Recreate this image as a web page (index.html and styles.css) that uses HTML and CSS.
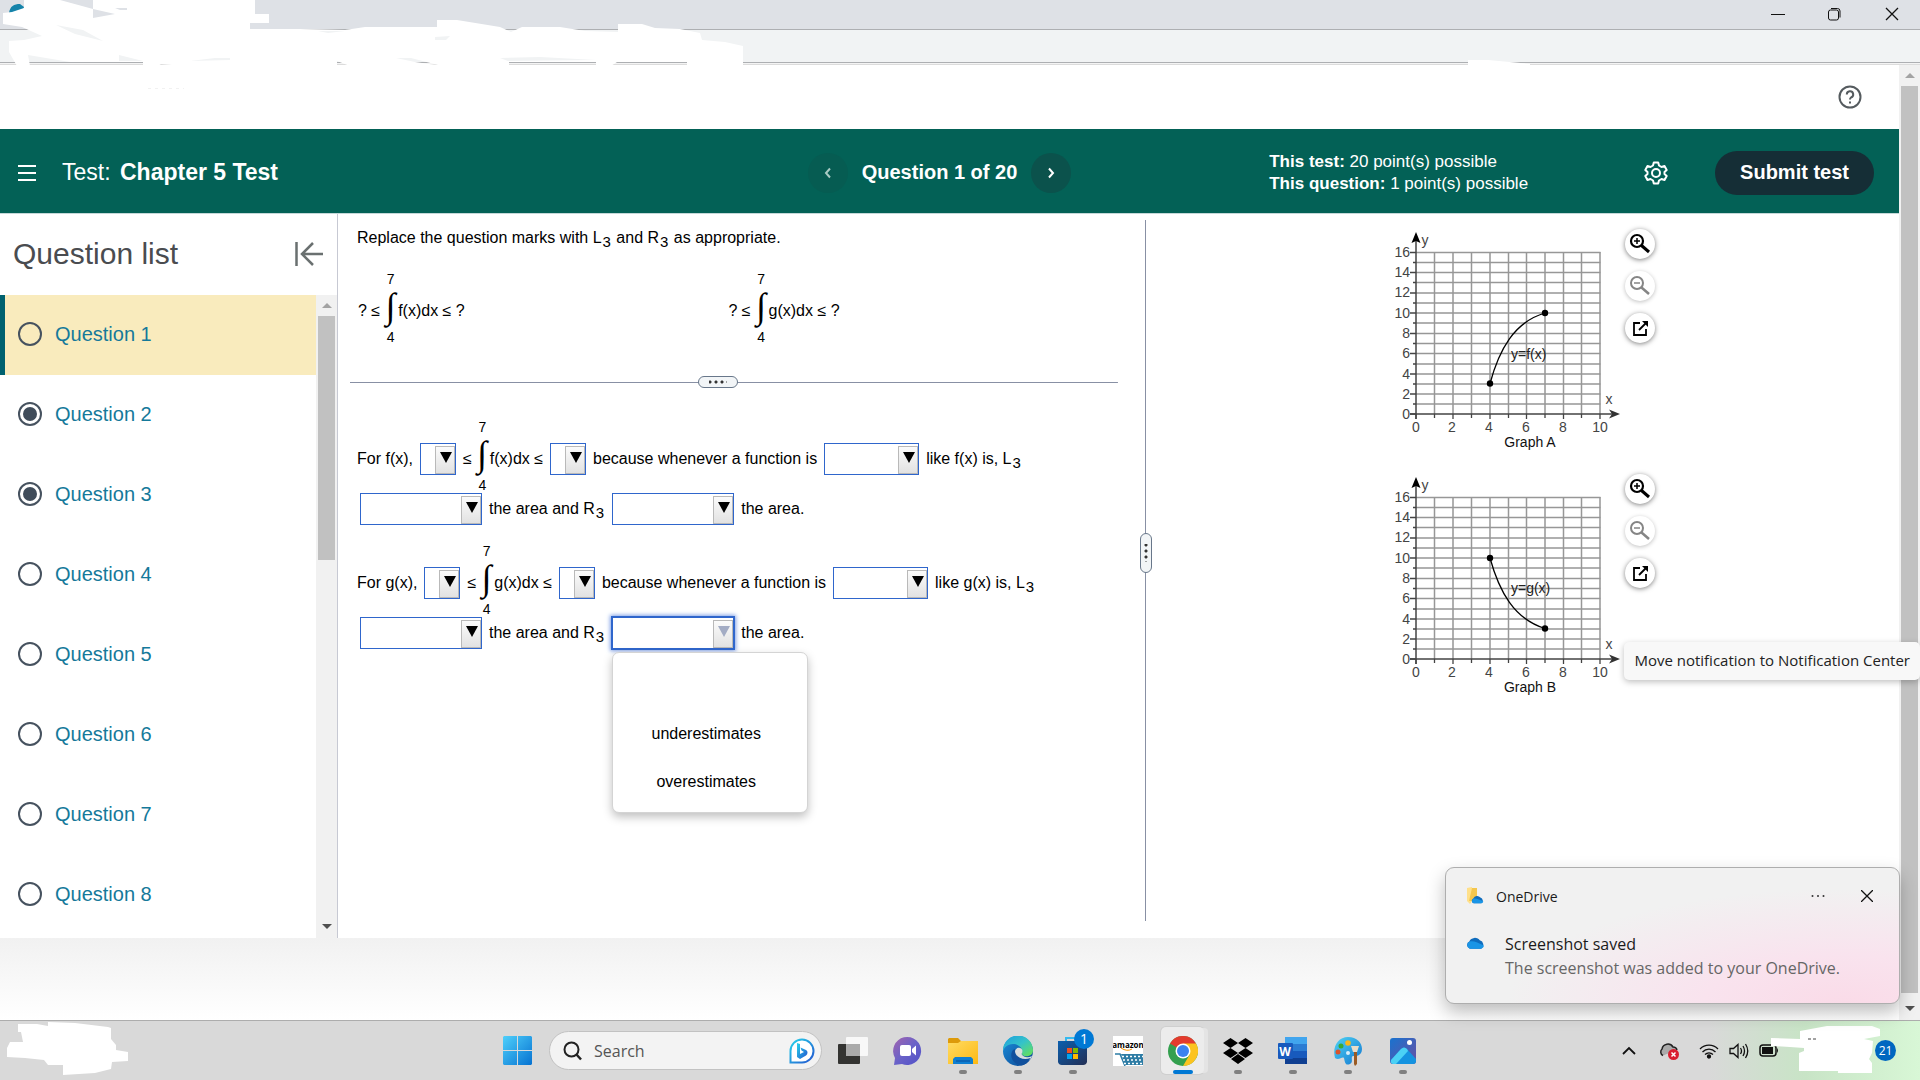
FILE: index.html
```html
<!DOCTYPE html>
<html lang="en">
<head>
    <meta charset="UTF-8">
    <meta name="viewport" content="width=device-width, initial-scale=1.0">
    <title>Chapter 5 Test</title>
    <link rel="stylesheet" href="styles.css">
</head>
<body>
    <!-- Shared drawings -->
    <svg class="defs" aria-hidden="true">
        <defs>
            <linearGradient id="winBlue" x1="0" y1="0" x2="1" y2="1"><stop offset="0" stop-color="#4fd0fb"/><stop offset="1" stop-color="#0672d1"/></linearGradient>
            <linearGradient id="bingBlue" x1="0" y1="0" x2="1" y2="1"><stop offset="0" stop-color="#27d4ea"/><stop offset="1" stop-color="#2355d0"/></linearGradient>
            <linearGradient id="chatPurple" x1="0" y1="0" x2="1" y2="1"><stop offset="0" stop-color="#a464ad"/><stop offset=".5" stop-color="#6a62c8"/><stop offset="1" stop-color="#5050c8"/></linearGradient>
            <linearGradient id="folderYellow" x1="0" y1="0" x2="1" y2="1"><stop offset="0" stop-color="#ffdb63"/><stop offset="1" stop-color="#fdb913"/></linearGradient>
            <linearGradient id="edgeTop" x1="0" y1="0" x2="1" y2="1"><stop offset="0" stop-color="#1c9ee0"/><stop offset=".5" stop-color="#35c3c9"/><stop offset="1" stop-color="#6be34c"/></linearGradient>
            <linearGradient id="edgeBody" x1="0" y1="0" x2="1" y2="1"><stop offset="0" stop-color="#1b8fdc"/><stop offset="1" stop-color="#0c4591"/></linearGradient>
            <linearGradient id="storeBlue" x1="0" y1="0" x2="1" y2="1"><stop offset="0" stop-color="#0b5fae"/><stop offset="1" stop-color="#232f55"/></linearGradient>
            <linearGradient id="photoBg" x1="0" y1="0" x2="1" y2="1"><stop offset="0" stop-color="#1873cf"/><stop offset="1" stop-color="#6a4fa3"/></linearGradient>
            <linearGradient id="paintBlue" x1="0" y1="0" x2="1" y2="1"><stop offset="0" stop-color="#4fd3f4"/><stop offset="1" stop-color="#1377d0"/></linearGradient>
        </defs>

        <symbol id="zoomIn" viewBox="0 0 22 22"><circle cx="8" cy="8" r="6" fill="none" stroke="currentColor" stroke-width="2.200"/><path d="M5 8H11M8 5V11" stroke="currentColor" stroke-width="1.500"/><path d="M12.500 12.500L20 19" stroke="currentColor" stroke-width="3"/></symbol>
        <symbol id="zoomOut" viewBox="0 0 22 22"><circle cx="8" cy="8" r="6" fill="none" stroke="currentColor" stroke-width="2"/><path d="M5 8H11" stroke="currentColor" stroke-width="1.500"/><path d="M12.500 12.500L20 19" stroke="currentColor" stroke-width="2.500"/></symbol>
        <symbol id="popOut" viewBox="0 0 22 22"><path d="M11 6H5V18H17V12" fill="none" stroke="currentColor" stroke-width="1.800"/><path d="M10 13L17 6" stroke="currentColor" stroke-width="1.800"/><path d="M13 4H19V10Z" fill="currentColor"/></symbol>
        <symbol id="cloud" viewBox="0 0 20 14"><path d="M4 13A4 4 0 0 1 3.500 5.500A6.500 6.500 0 0 1 14.500 4A5 5 0 0 1 16 13Z" fill="#0f6cbd"/><path d="M4 13A4 4 0 0 1 4 5.500C8 4.500 13 7 19 10A4 4 0 0 1 16 13Z" fill="#1a95e6"/></symbol>
    </svg>

    <!-- Browser window -->
    <header class="titlebar">
        <button class="win-btn" aria-label="Minimize"><svg width="14" height="14"><path d="M0 7.500H14" stroke="#111"/></svg></button>
        <button class="win-btn" aria-label="Restore"><svg width="14" height="14" fill="none" stroke="#111"><rect x="0.500" y="3" width="10" height="10" rx="2"/><path d="M3 1.500H9.500A2.500 2.500 0 0 1 12 4V10.500"/></svg></button>
        <button class="win-btn" aria-label="Close"><svg width="14" height="14"><path d="M1 1L13 13M13 1L1 13" stroke="#111" stroke-width="1.300"/></svg></button>
    </header>
    <div class="toolbar"></div>
    <svg class="cover-top" width="760" height="96" aria-hidden="true">
        <path d="M9 13C10 6 14 4 20 4L24 7L22 13Z" fill="#1583aa"/>
        <path fill="#fff" d="M3 13L12 12L24 8V0H60L93 9V0H255V14H269V23H250V29H300L345 30L365 27H437V20H457L500 27L511 32L522 27H560L585 31L618 32V24H642L655 28L680 29L700 33L702 40L725 42L743 46V66H687V62H617L611 66H596V62H509V66H442L411 58H396L415 62L443 66H350L337 61V66H183L161 64L158 66H143V62H91L70 62L28 55L30 66H17L9 52V41L24 40L42 36L22 27L3 24Z"/>
        <path fill="#dee1e6" d="M93 9L115 14L93 18ZM115 8H127V10H120Z"/>
        <path fill="#f1f3f4" d="M56 25L83 30L103 41L75 34ZM119 55L143 61H119ZM435 37L450 36L446 40L435 40ZM190 61L215 58H230V60ZM500 58L540 57L596 60L508 61ZM318 31L345 31L328 33Z"/>
        <path d="M148 88.500H184" stroke="#f1f1f1" stroke-dasharray="3 4"/>
    </svg>
    <svg class="cover-right" width="64" height="6" aria-hidden="true"><path d="M0 0H20L62 4V6H0Z" fill="#fff"/></svg>

    <div class="viewport">
        <div class="page">
            <div class="help-bar">
                <button class="icon-btn" aria-label="Help">
                    <svg width="24" height="24" fill="none" stroke="#555b5f" stroke-width="2"><circle cx="12" cy="12" r="10.500"/><path d="M8.800 9.500A3.200 3.200 0 1 1 13 12.500C12.200 13 12 13.500 12 14.500"/><path d="M12 16.500V18.500"/></svg>
                </button>
            </div>

            <div class="test-bar">
                <div class="test-name">
                    <button class="icon-btn" aria-label="Menu"><svg width="20" height="20"><path d="M1 3H19M1 10H19M1 17H19" stroke="#fff" stroke-width="2"/></svg></button>
                    <h1>Test: <strong>Chapter 5 Test</strong></h1>
                </div>
                <nav class="pager">
                    <button class="round dim" aria-label="Previous question"><svg width="8" height="12"><path d="M6 1.500L2 6L6 10.500" fill="none" stroke="#a9cbc4" stroke-width="2"/></svg></button>
                    <strong>Question 1 of 20</strong>
                    <button class="round" aria-label="Next question"><svg width="8" height="12"><path d="M2 1.500L6 6L2 10.500" fill="none" stroke="#fff" stroke-width="2"/></svg></button>
                </nav>
                <div class="test-tools">
                    <p class="points"><strong>This test:</strong> 20 point(s) possible<br><strong>This question:</strong> 1 point(s) possible</p>
                    <button class="icon-btn gear" aria-label="Settings">
                        <svg width="24" height="24" fill="none" stroke="#fff" stroke-width="2" stroke-linejoin="round"><path d="M9.800 1.500H14.200L15 4.500L17.500 6L20.500 5L22.700 9L20.500 11V13L22.700 15L20.500 19L17.500 18L15 19.500L14.200 22.500H9.800L9 19.500L6.500 18L3.500 19L1.300 15L3.500 13V11L1.300 9L3.500 5L6.500 6L9 4.500Z"/><circle cx="12" cy="12" r="4"/></svg>
                    </button>
                    <button class="submit">Submit test</button>
                </div>
            </div>

            <div class="workspace">
                <!-- Question list -->
                <aside class="sidebar">
                    <div class="sidebar-head">
                        <h2>Question list</h2>
                        <button class="icon-btn" aria-label="Collapse list"><svg width="30" height="26" fill="none" stroke="#6a7070" stroke-width="2.500"><path d="M2.500 1V25M29 13H8M19 2L8 13L19 24"/></svg></button>
                    </div>
                    <div class="sidebar-body">
                        <div class="questions">
                            <label class="question current"><input type="radio" name="q1">Question 1</label>
                            <label class="question"><input type="radio" name="q2" checked>Question 2</label>
                            <label class="question"><input type="radio" name="q3" checked>Question 3</label>
                            <label class="question"><input type="radio" name="q4">Question 4</label>
                            <label class="question"><input type="radio" name="q5">Question 5</label>
                            <label class="question"><input type="radio" name="q6">Question 6</label>
                            <label class="question"><input type="radio" name="q7">Question 7</label>
                            <label class="question"><input type="radio" name="q8">Question 8</label>
                        </div>
                        <div class="scrollbar list-scroll"><i class="up"></i><i class="thumb"></i><i class="down"></i></div>
                    </div>
                </aside>

                <!-- Exercise -->
                <main class="exercise">
                    <section class="problem">
                        <p class="prompt">Replace the question marks with L<sub>3</sub> and R<sub>3</sub> as appropriate.</p>
                        <div class="statements">
                            <div class="math-row">? ≤<span class="integral"><span>7</span><b>∫</b><span>4</span></span>f(x)dx ≤ ?</div>
                            <div class="math-row">? ≤<span class="integral"><span>7</span><b>∫</b><span>4</span></span>g(x)dx ≤ ?</div>
                        </div>
                        <div class="split-h"><button aria-label="Resize question"></button></div>

                        <div class="answer">
                            <div class="math-row">
                                <span>For f(x),</span>
                                <span class="drop small"><select aria-label="Lower sum of f"><option></option></select></span>
                                <span>≤</span><span class="integral"><span>7</span><b>∫</b><span>4</span></span><span>f(x)dx ≤</span>
                                <span class="drop small"><select aria-label="Upper sum of f"><option></option></select></span>
                                <span>because whenever a function is</span>
                                <span class="drop medium"><select aria-label="Behavior of f"><option></option></select></span>
                                <span>like f(x) is, L<sub>3</sub></span>
                            </div>
                            <div class="text-row">
                                <span class="drop large"><select aria-label="L3 for f"><option></option></select></span>
                                <span>the area and R<sub>3</sub></span>
                                <span class="drop large"><select aria-label="R3 for f"><option></option></select></span>
                                <span>the area.</span>
                            </div>
                        </div>

                        <div class="answer">
                            <div class="math-row">
                                <span>For g(x),</span>
                                <span class="drop small"><select aria-label="Lower sum of g"><option></option></select></span>
                                <span>≤</span><span class="integral"><span>7</span><b>∫</b><span>4</span></span><span>g(x)dx ≤</span>
                                <span class="drop small"><select aria-label="Upper sum of g"><option></option></select></span>
                                <span>because whenever a function is</span>
                                <span class="drop medium"><select aria-label="Behavior of g"><option></option></select></span>
                                <span>like g(x) is, L<sub>3</sub></span>
                            </div>
                            <div class="text-row">
                                <span class="drop large"><select aria-label="L3 for g"><option></option></select></span>
                                <span>the area and R<sub>3</sub></span>
                                <span class="drop large open">
                                    <select aria-label="R3 for g"><option></option></select>
                                    <ul class="menu" role="listbox">
                                        <li role="option"></li>
                                        <li role="option">underestimates</li>
                                        <li role="option">overestimates</li>
                                    </ul>
                                </span>
                                <span>the area.</span>
                            </div>
                        </div>
                    </section>

                    <div class="split-v"><button aria-label="Resize panels"></button></div>

                    <section class="graphs">
                        <figure class="graph">
                            <svg width="232" height="222" role="img" aria-label="Graph A">
                                <g id="axes">
                                    <g fill="none" stroke="#979797" stroke-width="1.5">
                                        <path d="M44.5 20V182M63 20V182M81.5 20V182M100 20V182M118.500 20V182M136.500 20V182M155 20V182M173.500 20V182M191.500 20V182M210 20V182"/>
                                        <path d="M26 20.500H210.500M26 30.500H210.500M26 40.500H210.500M26 50.500H210.500M26 61H210.500M26 71H210.500M26 81H210.500M26 91H210.500M26 101.500H210.500M26 111.500H210.500M26 121.500H210.500M26 132H210.500M26 142H210.500M26 152H210.500M26 162H210.500M26 172H210.500"/>
                                    </g>
                                    <path d="M20 20.500H26M23 30.500H26M20 40.500H26M23 50.500H26M20 61H26M23 71H26M20 81H26M23 91H26M20 101.500H26M23 111.500H26M20 121.500H26M23 132H26M20 142H26M23 152H26M20 162H26M23 172H26M20 182H26M26 182V187M44.500 182V186M63 182V187M81.500 182V186M100 182V187M118.500 182V186M136.500 182V187M155 182V186M173.500 182V187M191.500 182V186M210 182V187" fill="none" stroke="#444" stroke-width="1.300"/>
                                    <path d="M26 187V6M20 182H224" fill="none" stroke="#444" stroke-width="1.500"/>
                                    <path d="M26 0L30.500 11L26 9L21.500 11Z" fill="#000"/>
                                    <path d="M230 182L219 177.500L222 182L219 186.500Z" fill="#333"/>
                                    <g class="tick" text-anchor="end">
                                        <text x="20" y="25">16</text><text x="20" y="45">14</text><text x="20" y="65">12</text>
                                        <text x="20" y="86">10</text><text x="20" y="106">8</text><text x="20" y="126">6</text>
                                        <text x="20" y="147">4</text><text x="20" y="167">2</text><text x="20" y="187">0</text>
                                    </g>
                                    <g class="tick" text-anchor="middle">
                                        <text x="26" y="200">0</text><text x="62" y="200">2</text><text x="99" y="200">4</text>
                                        <text x="136" y="200">6</text><text x="173" y="200">8</text><text x="210" y="200">10</text>
                                        <text x="35" y="13">y</text><text x="219" y="172">x</text>
                                    </g>
                                </g>
                                <path d="M100 151.500C109 118 124 90 155 81" fill="none" stroke="#000" stroke-width="1.300"/>
                                <circle cx="100" cy="151.500" r="3.200"/><circle cx="155" cy="81" r="3.200"/>
                                <text class="curve" x="121" y="127">y=f(x)</text>
                                <text class="caption" x="140" y="215" text-anchor="middle">Graph A</text>
                            </svg>
                            <div class="graph-tools">
                                <button aria-label="Zoom in"><svg width="22" height="22"><use href="#zoomIn"/></svg></button>
                                <button aria-label="Zoom out" class="off"><svg width="22" height="22"><use href="#zoomOut"/></svg></button>
                                <button aria-label="Open in window"><svg width="22" height="22"><use href="#popOut"/></svg></button>
                            </div>
                        </figure>
                        <figure class="graph">
                            <svg width="232" height="222" role="img" aria-label="Graph B">
                                <use href="#axes"/>
                                <path d="M100 81C109 114 124 142 155 151.500" fill="none" stroke="#000" stroke-width="1.300"/>
                                <circle cx="100" cy="81" r="3.200"/><circle cx="155" cy="151.500" r="3.200"/>
                                <text class="curve" x="121" y="116">y=g(x)</text>
                                <text class="caption" x="140" y="215" text-anchor="middle">Graph B</text>
                            </svg>
                            <div class="graph-tools">
                                <button aria-label="Zoom in"><svg width="22" height="22"><use href="#zoomIn"/></svg></button>
                                <button aria-label="Zoom out" class="off"><svg width="22" height="22"><use href="#zoomOut"/></svg></button>
                                <button aria-label="Open in window"><svg width="22" height="22"><use href="#popOut"/></svg></button>
                            </div>
                        </figure>
                    </section>
                </main>
            </div>
            <footer class="page-foot"></footer>
        </div>
        <div class="scrollbar page-scroll"><i class="up"></i><i class="thumb"></i><i class="down"></i></div>
    </div>

    <!-- Taskbar -->
    <footer class="taskbar">
        <div class="task-left">
            <svg class="cover-left" width="130" height="56" aria-hidden="true"><path fill="#fff" d="M18 3H37L48 5V1L75 2L108 6L111 7V18L116 24V29L128 31V40L112 41L111 48L95 52L63 54V44H48L44 39L25 37L7 36V27L10 21H23L21 11H18Z"/></svg>
        </div>
        <div class="task-icons">
            <button class="app" aria-label="Start"><svg width="29" height="29" fill="url(#winBlue)"><path d="M1 0H14V14H0V1ZM15 0H28L29 1V14H15ZM0 15H14V29H1L0 28ZM15 15H29V28L28 29H15Z"/></svg></button>
            <label class="search">
                <svg width="20" height="20" fill="none" stroke="#222" stroke-width="2"><circle cx="8.500" cy="8.500" r="7"/><path d="M13.500 13.500L18 18.500" stroke-width="2.500"/></svg>
                <input type="text" placeholder="Search" aria-label="Search">
                <svg width="26" height="26"><path d="M1.500 24.500V13A11.500 11.500 0 1 1 13 24.500Z" fill="#fff" stroke="url(#bingBlue)" stroke-width="2"/><path d="M8 5L11 6V16L15 14L12.500 12.500L11.500 9.500L17 12C19 13 19 16 17 17.500L11 21L8 19Z" fill="url(#bingBlue)"/></svg>
            </label>
            <button class="app" aria-label="Task view"><svg width="30" height="30"><rect x="0" y="8" width="22" height="20" rx="1" fill="#333331"/><rect x="8" y="1" width="22" height="19" rx="1" fill="#fff" fill-opacity=".8"/><rect x="8" y="8" width="14" height="12" fill="#aaa"/></svg></button>
            <button class="app" aria-label="Chat"><svg width="30" height="30"><path d="M1 29L2 22A14 14 0 1 1 9 28Z" fill="url(#chatPurple)"/><rect x="7" y="9" width="11" height="11" rx="2" fill="#fff"/><path d="M19 13L23 9.500V19.500L19 16Z" fill="#fff"/></svg></button>
            <button class="app running" aria-label="File Explorer"><svg width="30" height="30"><path d="M0 3L1 2H10L13 5H29L30 6V12H0Z" fill="#dd9a0a"/><path d="M0 7H10L13 5H30V28H0Z" fill="url(#folderYellow)"/><path d="M5 28V23L7 21H23L25 23V28Z" fill="#0f7fd2"/><path d="M8 25H22" stroke="#084f9c"/></svg></button>
            <button class="app running" aria-label="Edge"><svg width="30" height="30"><circle cx="15" cy="15" r="15" fill="url(#edgeBody)"/><path d="M0 15A15 15 0 0 1 30 14C30 19 26 21 21 20L18.500 18C21 14 17 8 10 8C4 8 1 12 0 15Z" fill="url(#edgeTop)"/><path d="M12 18C11 14 14 11 17 12C20 13 20 16 18.500 18C21 22 25 22 29 20L27 24C20 26 13 24 12 18Z" fill="#d9dddd"/><path d="M10 14C6 19 9 28 18 29.500C23 29 26 25 27.500 22C20 25 11 21 12 13Z" fill="#10509d"/></svg></button>
            <button class="app running" aria-label="Store"><svg width="30" height="30"><path d="M8 7V2H20V7" fill="none" stroke="#35b9ef" stroke-width="2"/><path d="M0 5H29V26A4 4 0 0 1 25 29H4A4 4 0 0 1 0 26Z" fill="url(#storeBlue)"/><path d="M9 12H14V17H9Z" fill="#f25022"/><path d="M15 12H20V17H15Z" fill="#7fba00"/><path d="M9 18H14V23H9Z" fill="#00a4ef"/><path d="M15 18H20V23H15Z" fill="#ffb900"/></svg><span class="count">1</span></button>
            <button class="app" aria-label="Amazon"><svg width="30" height="30"><rect width="30" height="30" fill="#fff"/><text class="amazon" x="15" y="12" text-anchor="middle">amazon</text><path d="M8 12Q14 16 19 13" fill="none" stroke="#f79400"/><path d="M2 18H7L12 30" fill="none" stroke="#2d7ca5" stroke-width="1.500"/><path d="M8 18H30V29H12Z" fill="#2d7ca5"/><path d="M9 20.500H30M10 24H30M11 27.500H30" stroke="#fff" stroke-width="1.500" stroke-dasharray="2 2"/></svg></button>
            <button class="app running active" aria-label="Chrome"><svg width="30" height="30"><circle cx="15" cy="15" r="15" fill="#34a04f"/><path d="M15 15L2 7.500A15 15 0 0 1 28 7.500Z" fill="#e33b2e"/><path d="M15 7.500H28A15 15 0 0 1 15 30L22 18Z" fill="#fcc31f"/><circle cx="15" cy="15" r="7.500" fill="#fff"/><circle cx="15" cy="15" r="6" fill="#3b82f0"/></svg></button>
            <button class="app running" aria-label="Dropbox"><svg width="30" height="30"><path d="M7.500 2L15 7L7.500 12L0 7ZM22.500 2L30 7L22.500 12L15 7ZM7.500 12L15 17L7.500 22L0 17ZM22.500 12L30 17L22.500 22L15 17ZM15 18L22 23L15 28L8 23Z"/></svg></button>
            <button class="app running" aria-label="Word"><svg width="30" height="30"><path d="M7 1H29V8H7Z" fill="#41a5ee"/><path d="M7 8H29V15H7Z" fill="#2b7cd3"/><path d="M7 15H29V22H7Z" fill="#185abd"/><path d="M7 22H29V28H7Z" fill="#103f91"/><rect x="0" y="7" width="15" height="16" rx="1" fill="#185abd"/><text class="word" x="7" y="20" text-anchor="middle">W</text></svg></button>
            <button class="app running" aria-label="Paint"><svg width="30" height="30"><path d="M2 22C-1 11 5 1 15 1C24 1 29 7 29 13C29 20 23 20 20 20C17 21 21 26 17 28C12 30 12 26 11 22C9 20 6 25 2 22Z" fill="url(#paintBlue)"/><circle cx="15" cy="7" r="2.800" fill="#f9b71d"/><circle cx="8" cy="10" r="2.500" fill="#39a935"/><circle cx="5" cy="16" r="2.500" fill="#d9532c"/><circle cx="15" cy="17" r="2" fill="#d9eefa"/><path d="M21 16H24V28L22 30L21 28Z" fill="#9a5b24"/><path d="M18 10H26L24 16H20Z" fill="#e9dcc6"/></svg></button>
            <button class="app running" aria-label="Photos"><svg width="28" height="28"><rect x="1" y="1" width="26" height="26" rx="3" fill="url(#photoBg)"/><path d="M2 23L12 12C14 10 16 10 18 12L27 22V24A3 3 0 0 1 24 27H4A3 3 0 0 1 2 23Z" fill="#1593e0"/><path d="M2 23L12 12C14 10 16 10 18 12L19 14L7 27H4A3 3 0 0 1 2 23Z" fill="#4bd1f5"/><circle cx="20.500" cy="5.500" r="2.500" fill="#fff"/></svg></button>
        </div>
        <div class="tray">
            <svg width="20" height="20"><path d="M4 13L10 7L16 13" fill="none" stroke="#111" stroke-width="1.800"/></svg>
            <svg width="20" height="20"><path d="M4 14.500A4 4 0 0 1 3 8A6 6 0 0 1 14 6A4 4 0 0 1 18 9" fill="#aaa" stroke="#222" stroke-width="1.500"/><circle cx="14.500" cy="13.500" r="5.500" fill="#d91f30"/><path d="M12.500 11.500L16.500 15.500M16.500 11.500L12.500 15.500" stroke="#fff" stroke-width="1.500"/></svg>
            <svg width="20" height="20" fill="none" stroke="#111" stroke-width="1.300"><path d="M1 8A12.500 12.500 0 0 1 19 8M3.500 11A9 9 0 0 1 16.500 11M6 13.500A6 6 0 0 1 14 13.500"/><circle cx="10" cy="15.500" r="1.500" fill="#111"/></svg>
            <svg width="20" height="20" fill="none" stroke="#111" stroke-width="1.300"><path d="M1 7.500H4.500L9 3.500V16.500L4.500 12.500H1Z"/><path d="M11.500 7Q13.500 10 11.500 13M14 5Q17 10 14 15M16.500 3Q21 10 16.500 17"/></svg>
            <svg width="20" height="20"><rect x="1" y="4" width="16" height="11" rx="3" fill="none" stroke="#111" stroke-width="1.500"/><rect x="3" y="6" width="11" height="7" fill="#111"/><path d="M18 7Q20 9.500 18 12Z" fill="#111"/></svg>
            <span class="badge">21</span>
            <svg class="cover-clock" width="112" height="50" aria-hidden="true"><path fill="#fff" d="M0 13L29 14V6L56 1H101L109 4V11L93 14L102 16L101 28L98 34L101 38V48H67V46H28V28L33 26V23L19 22L0 21Z"/><path d="M37 14H46" stroke="#444" stroke-dasharray="3 2"/></svg>
        </div>
    </footer>

    <!-- Notification -->
    <div class="tooltip" role="tooltip">Move notification to Notification Center</div>
    <div class="toast" role="status">
        <div class="toast-head">
            <svg width="18" height="18"><path d="M1 1L6 0V14L4 17L1 14Z" fill="#ffe08a"/><path d="M6 1H11V14H3Z" fill="#f4c64e"/><svg x="5" y="8" width="13" height="9"><use href="#cloud"/></svg></svg>
            <span>OneDrive</span>
            <button aria-label="More"><svg width="14" height="4" fill="#333"><circle cx="1.500" cy="2" r="1"/><circle cx="7" cy="2" r="1"/><circle cx="12.500" cy="2" r="1"/></svg></button>
            <button aria-label="Dismiss"><svg width="12" height="12"><path d="M0 0L12 12M12 0L0 12" stroke="#111" stroke-width="1.300"/></svg></button>
        </div>
        <div class="toast-body">
            <svg width="19" height="14"><use href="#cloud"/></svg>
            <div>
                <p>Screenshot saved</p>
                <p class="muted">The screenshot was added to your OneDrive.</p>
            </div>
        </div>
    </div>
</body>
</html>
```
FILE: styles.css
```css
* {
    margin: 0;
    padding: 0;
    box-sizing: border-box;
}

body {
    height: 100vh;
    display: flex;
    flex-direction: column;
    position: relative;
    overflow: hidden;
    font-family: "Liberation Sans", Arial, sans-serif;
    font-size: 16px;
    color: #000;
    background: #fff;
}

button {
    border: none;
    background: none;
    font: inherit;
    color: inherit;
    cursor: pointer;
}

svg {
    display: block;
    flex: none;
}

.defs {
    position: absolute;
    width: 0;
    height: 0;
}

/* Browser window */
.titlebar {
    height: 30px;
    display: flex;
    justify-content: flex-end;
    align-items: flex-start;
    background: #dee1e6;
    border-bottom: 1px solid #adafb2;
}

.win-btn {
    width: 57px;
    height: 27px;
    display: grid;
    place-items: center;
}

.toolbar {
    height: 33px;
    margin-bottom: 2px;
    background: #f1f3f4;
    border-bottom: 1px solid #adafb2;
    box-shadow: 0 1px #f4f4f4, 0 2px #dcdcdc;
}

.cover-top {
    position: absolute;
    left: 0;
    top: 0;
}

.cover-right {
    position: absolute;
    right: 388px;
    top: 60px;
}

.viewport {
    flex: 1;
    min-height: 0;
    display: flex;
}

.page {
    flex: 1;
    display: flex;
    flex-direction: column;
    min-width: 0;
}

/* Scrollbars */
.scrollbar {
    width: 21px;
    flex: none;
    display: flex;
    flex-direction: column;
    align-items: center;
    background: #f1f1f1;
}

.scrollbar .up,
.scrollbar .down {
    border: 5px solid transparent;
}

.scrollbar .up {
    border-top: none;
    border-bottom-color: #a3a3a3;
    margin: 8px 0;
}

.scrollbar .down {
    border-bottom: none;
    border-top-color: #505050;
    margin: auto 0 9px;
}

.scrollbar .thumb {
    width: 17px;
    background: #c1c1c1;
}

.list-scroll .thumb {
    height: 38%;
}

.page-scroll .thumb {
    height: 95%;
}

/* Header */
.help-bar {
    height: 64px;
    display: flex;
    justify-content: flex-end;
    align-items: center;
    padding-right: 37px;
}

.test-bar {
    height: 85px;
    display: grid;
    grid-template-columns: 1fr auto 1fr;
    align-items: center;
    padding: 3px 25px 0 15px;
    background: #036156;
    border-bottom: 1px solid #c5d8d8;
    color: #fff;
}

.test-name {
    display: flex;
    align-items: center;
    gap: 25px;
    padding-left: 2px;
}

.test-name h1 {
    font-size: 23px;
    font-weight: 400;
}

.test-name strong {
    margin-left: 3px;
}

.pager {
    display: flex;
    align-items: center;
    gap: 14px;
    margin-left: -10px;
    font-size: 20px;
}

.round {
    width: 40px;
    height: 40px;
    border-radius: 50%;
    display: grid;
    place-items: center;
    background: #0b524c;
}

.round.dim {
    background: #065c52;
}

.test-tools {
    display: flex;
    align-items: center;
    justify-content: flex-end;
}

.points {
    font-size: 17px;
    line-height: 22px;
}

.gear {
    margin: 0 47px 0 116px;
}

.submit {
    height: 44px;
    padding: 0 25px;
    border-radius: 22px;
    background: #152e36;
    font-size: 20px;
    font-weight: 700;
}

/* Question list */
.workspace {
    flex: 1;
    min-height: 0;
    display: flex;
}

.sidebar {
    width: 338px;
    flex: none;
    display: flex;
    flex-direction: column;
    border-right: 1px solid #c7c9d3;
}

.sidebar-head {
    height: 81px;
    display: flex;
    justify-content: space-between;
    align-items: center;
    padding: 0 13px 2px;
}

.sidebar-head h2 {
    font-size: 30px;
    font-weight: 400;
    color: #4a4c50;
}

.sidebar-body {
    flex: 1;
    min-height: 0;
    display: flex;
}

.questions {
    flex: 1;
    overflow: hidden;
}

.question {
    height: 80px;
    display: flex;
    align-items: center;
    gap: 13px;
    padding: 0 0 2px 18px;
    font-size: 20px;
    color: #15799a;
}

.question.current {
    padding-left: 13px;
    border-left: 5px solid #00616f;
    background: #f9ebbd;
}

.question input {
    appearance: none;
    width: 24px;
    height: 24px;
    border: 2px solid #46525f;
    border-radius: 50%;
    padding: 3px;
}

.question input:checked {
    background: #404c5a content-box;
}

/* Exercise */
.exercise {
    flex: 1;
    min-width: 0;
    display: grid;
    grid-template-columns: minmax(0, 108fr) auto minmax(0, 100fr);
}

.problem {
    padding: 14px 27px 0 19px;
}

.graphs {
    display: flex;
    flex-direction: column;
    align-items: center;
    gap: 23px;
    padding: 18px 6px 0 0;
}

sub {
    margin: 0 1px;
    font-size: 15px;
    line-height: 0;
    vertical-align: -4px;
}

.prompt {
    line-height: 20px;
}

.statements {
    display: grid;
    grid-template-columns: 1fr 1fr;
    margin: 29px 20px 31px 0;
}

.math-row {
    height: 68px;
    display: flex;
    align-items: center;
    white-space: nowrap;
}

.statements .math-row {
    padding-left: 1px;
}

.integral {
    align-self: flex-end;
    width: 18px;
    padding-left: 3px;
    display: flex;
    flex-direction: column;
    align-items: center;
    font-size: 14px;
    line-height: 16px;
}

.integral b {
    height: 42px;
    font-family: "Liberation Serif", serif;
    font-weight: 400;
    font-size: 36px;
    line-height: 38px;
}

.split-h {
    height: 12px;
    margin: 0 0 37px -7px;
    padding-right: 32px;
    display: flex;
    justify-content: center;
    background: linear-gradient(#8890a4, #8890a4) center / 100% 1px no-repeat;
}

.split-h button,
.split-v button {
    border: 1px solid #68778a;
    border-radius: 6px;
}

.split-h button {
    width: 40px;
    height: 12px;
    padding: 0 10px;
    background: radial-gradient(circle, #333 1px, transparent 2px) 10px 2px / 6px 6px repeat-x content-box, #f2f5f7;
}

.split-v {
    width: 12px;
    margin: 6px 0 17px -5px;
    display: flex;
    align-items: center;
    background: linear-gradient(#8890a4, #8890a4) center / 1px 100% no-repeat;
}

.split-v button {
    width: 12px;
    height: 40px;
    margin-bottom: 36px;
    padding: 10px 0;
    background: radial-gradient(circle, #333 1px, transparent 2px) 2px 10px / 6px 6px repeat-y content-box, #f2f5f7;
}

.answer {
    margin-bottom: 24px;
}

.drop {
    position: relative;
    display: inline-block;
    flex: none;
    height: 32px;
    margin: 0 7px;
}

.drop select {
    appearance: none;
    display: block;
    width: 100%;
    height: 100%;
    border: 1px solid #2f66cc;
    border-radius: 0;
    background: #fff;
}

.drop::before {
    content: "";
    position: absolute;
    right: 1px;
    top: 3px;
    width: 18px;
    height: 26px;
    border: 1px solid #b9b9b9;
    background: linear-gradient(#fbfbfb, #e2e2e2);
}

.drop::after {
    content: "";
    position: absolute;
    right: 4px;
    top: 9px;
    border: 6px solid transparent;
    border-top: 11px solid #000;
    border-bottom: none;
}

.drop.small {
    width: 36px;
}

.drop.medium {
    width: 95px;
}

.drop.large {
    width: 122px;
}

.text-row {
    height: 32px;
    display: flex;
    align-items: center;
    padding-left: 3px;
}

.text-row .drop:first-child {
    margin-left: 0;
}

.drop.open select {
    outline: 1px solid #2f66cc;
    box-shadow: 0 0 4px 2px #7fa0e6;
}

.drop.open::after {
    border-top-color: #a3acc4;
}

.menu {
    position: absolute;
    left: 0;
    top: 35px;
    z-index: 2;
    width: 196px;
    padding: 9px 8px 6px 0;
    border: 1px solid #d4d4d4;
    border-radius: 7px;
    background: #fff;
    box-shadow: 0 4px 10px rgba(0, 0, 0, 0.25);
    list-style: none;
}

.menu li {
    height: 48px;
    line-height: 48px;
    text-align: center;
}

/* Graphs */
.graph {
    display: flex;
    gap: 3px;
}

.tick {
    font-size: 14px;
    fill: #444;
}

.curve {
    font-size: 14px;
    fill: #222;
}

.caption {
    font-size: 14px;
    fill: #111;
}

.graph-tools {
    display: flex;
    flex-direction: column;
    gap: 12px;
    margin-top: -3px;
}

.graph-tools button {
    width: 30px;
    height: 30px;
    display: grid;
    place-items: center;
    border-radius: 50%;
    background: #fff;
    box-shadow: 0 1px 5px rgba(0, 0, 0, 0.5);
}

.graph-tools .off {
    color: #858585;
    box-shadow: 0 1px 4px rgba(0, 0, 0, 0.25);
}

.page-foot {
    height: 82px;
    background: linear-gradient(#f1f1f1, #fff);
}

/* Taskbar */
.taskbar {
    height: 60px;
    display: grid;
    grid-template-columns: 1fr auto 1fr;
    align-items: center;
    border-top: 1px solid #adadad;
    background: linear-gradient(90deg, #d9d9d9 89%, #c8e4c6 94%, #d8f7d6);
    font-family: "Open Sans", "Noto Sans", sans-serif;
}

.task-left {
    align-self: start;
}

.task-icons {
    display: flex;
    align-items: center;
}

.app {
    position: relative;
    width: 55px;
    height: 47px;
    display: grid;
    place-items: center;
}

.running::after {
    content: "";
    position: absolute;
    bottom: 0;
    width: 8px;
    height: 4px;
    border-radius: 2px;
    background: #808080;
}

.active {
    width: 43px;
    margin: 0 6px;
    border-radius: 5px;
    background: #ececec;
    box-shadow: 5px 0 0 -1px #e4e4e4, 0 0 0 1px #cfcfcf;
}

.active::after {
    width: 20px;
    background: #0078d4;
}

.count {
    position: absolute;
    left: 29px;
    top: 2px;
    width: 20px;
    height: 20px;
    border-radius: 50%;
    background: #0078d4;
    color: #fff;
    font-size: 14px;
    line-height: 20px;
}

.amazon {
    font: 700 8px "Open Sans", sans-serif;
}

.word {
    font: 700 12px "Open Sans", sans-serif;
    fill: #fff;
}

.search {
    width: 273px;
    height: 39px;
    margin: 0 3px 0 4px;
    padding: 0 6px 0 13px;
    display: flex;
    align-items: center;
    gap: 11px;
    border: 1px solid #c2c2c2;
    border-radius: 20px;
    background: #f3f3f3;
}

.search input {
    flex: 1;
    min-width: 0;
    border: none;
    outline: none;
    background: none;
    font: 16px "Open Sans", sans-serif;
}

.search input::placeholder {
    color: #555;
}

.tray {
    position: relative;
    display: flex;
    justify-content: flex-end;
    align-items: center;
    gap: 10px;
    padding-right: 24px;
}

.tray svg:first-child,
.tray svg:nth-child(2) {
    margin-right: 10px;
}

.badge {
    width: 21px;
    height: 21px;
    margin-left: 86px;
    border-radius: 50%;
    background: #0067c0;
    color: #fff;
    font-size: 12px;
    line-height: 21px;
    text-align: center;
}

.cover-clock {
    position: absolute;
    right: 37px;
    top: -15px;
}

/* Notification */
.tooltip {
    position: absolute;
    right: 0;
    top: 642px;
    height: 38px;
    padding: 0 10px;
    border-radius: 5px;
    background: #f8f8f8;
    box-shadow: 0 2px 6px rgba(0, 0, 0, 0.25);
    color: #222;
    font: 15px/36px "Open Sans", "Noto Sans", sans-serif;
}

.toast {
    position: absolute;
    right: 20px;
    bottom: 76px;
    width: 455px;
    padding: 16px 20px 23px;
    border: 1px solid #aeaeae;
    border-radius: 9px;
    background: radial-gradient(ellipse at 88% 100%, #fadbe8 0, #f9e3ee 25%, rgba(241, 241, 241, 0) 60%), #f1f1f1;
    box-shadow: 0 8px 18px rgba(0, 0, 0, 0.25);
    font-family: "Open Sans", "Noto Sans", sans-serif;
    color: #1b1b1b;
}

.toast-head {
    height: 24px;
    display: flex;
    align-items: center;
    gap: 12px;
    font-size: 14px;
}

.toast-head span {
    flex: 1;
}

.toast-head button {
    width: 37px;
    display: grid;
    place-items: center;
}

.toast-head button:last-child {
    width: 24px;
    margin-left: 7px;
}

.toast-body {
    display: flex;
    gap: 20px;
    margin-top: 24px;
    font-size: 16px;
    line-height: 24px;
}

.toast-body svg {
    margin-top: 4px;
}

.muted {
    color: #666;
}
```
